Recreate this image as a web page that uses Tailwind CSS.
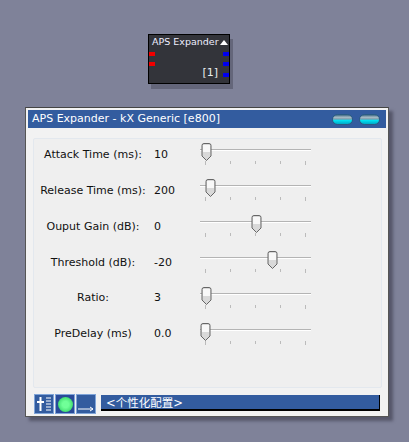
<!DOCTYPE html>
<html lang="en">
<head>
    <meta charset="UTF-8">
    <meta name="viewport" content="width=device-width, initial-scale=1.0">
    <title>APS Expander</title>
    <script src="https://cdn.jsdelivr.net/npm/@tailwindcss/browser@4"></script>
</head>
<body class="w-[409px] h-[442px] overflow-hidden bg-[#7f8299] font-['DejaVu_Sans','Noto_Sans_CJK_SC',sans-serif] text-[11px] text-[#111]">
    <!-- plugin box -->
    <div class="relative mt-[34px] ml-[148px] w-[82px] h-[50px] bg-[#33343a] border border-black shadow-[3px_5px_0_#64667a] text-white">
        <div class="flex items-center justify-between pl-[3px] pr-[1px] h-[15px] text-[9.5px] text-[#eef] whitespace-nowrap">
            <span>APS Expander</span>
            <svg width="8" height="5" viewBox="0 0 8 5"><path d="M4 0 8 5H0Z" fill="#fff"/></svg>
        </div>
        <div class="absolute left-0 top-[17px] w-[6px] h-[4px] bg-[#f00000]"></div>
        <div class="absolute left-0 top-[27px] w-[6px] h-[4px] bg-[#f00000]"></div>
        <div class="absolute right-0 top-[17px] w-[6px] h-[4px] bg-[#0000f0]"></div>
        <div class="absolute right-0 top-[27px] w-[6px] h-[4px] bg-[#0000f0]"></div>
        <div class="absolute right-0 top-[38px] w-[6px] h-[4px] bg-[#0000f0]"></div>
        <span class="absolute right-[11px] bottom-[2px] text-[#e8eef0]">[1]</span>
    </div>

    <!-- kX window -->
    <div class="mt-[23px] ml-[25px] w-[364px] h-[310px] bg-[#f2f2f2] border border-[#555] border-t-[#444] shadow-[4px_4px_3px_#55576a] pt-[2px] px-[1px]">
        <div class="flex items-center justify-between mx-[1px] h-[18px] bg-[#335c9f] pl-[4px] pr-[6px] text-white text-[11px] whitespace-nowrap">
            <span>APS Expander - kX Generic [e800]</span>
            <div class="flex gap-[6px]">
                <div class="w-[21px] h-[11px] rounded-full border border-[#2a5c84] bg-[linear-gradient(#3f6a85_0%,#a9bcc6_25%,#7f9cac_45%,#00e2f2_60%,#00a8c8_100%)]"></div>
                <div class="w-[21px] h-[11px] rounded-full border border-[#2a5c84] bg-[linear-gradient(#3f6a85_0%,#a9bcc6_25%,#7f9cac_45%,#00e2f2_60%,#00a8c8_100%)]"></div>
            </div>
        </div>

        <!-- parameters panel -->
        <div class="mt-[10px] ml-[6px] w-[349px] h-[250px] bg-[#efefef] border border-[#e3e8ee] rounded-[2px] pt-[5px]">
            <div class="flex items-start h-[36px]">
                <div class="w-[118px] text-center mt-[3px]">Attack Time (ms):</div>
                <div class="w-[46px] ml-[2px] mt-[3px]">10</div>
                <div class="relative w-[111px] h-[32px]">
                    <div class="absolute top-[5px] w-full h-[2px] bg-[#b4b4b4] border-b border-white"></div>
                    <div class="absolute left-[1px] -top-[1px] w-[11px] h-[19px]"><svg width="11" height="19" viewBox="0 0 11 19"><path d="M3 .5h5a2 2 0 0 1 2 2v10.5l-4.5 4.5-4.5-4.5V2.5a2 2 0 0 1 2-2z" fill="#d9d9d9" stroke="#666"/><path d="M2 2h7v7H2z" fill="#f8f8f8"/></svg></div>
                    <div class="absolute top-[17px] left-[5px] right-[5px] flex justify-between"><i class="w-px h-[4px] bg-[#bbb]"></i><i class="w-px h-[3px] bg-[#bbb]"></i><i class="w-px h-[3px] bg-[#bbb]"></i><i class="w-px h-[3px] bg-[#bbb]"></i><i class="w-px h-[4px] bg-[#bbb]"></i></div>
                </div>
            </div>
            <div class="flex items-start h-[36px]">
                <div class="w-[118px] text-center mt-[3px]">Release Time (ms):</div>
                <div class="w-[46px] ml-[2px] mt-[3px]">200</div>
                <div class="relative w-[111px] h-[32px]">
                    <div class="absolute top-[5px] w-full h-[2px] bg-[#b4b4b4] border-b border-white"></div>
                    <div class="absolute left-[5px] -top-[1px] w-[11px] h-[19px]"><svg width="11" height="19" viewBox="0 0 11 19"><path d="M3 .5h5a2 2 0 0 1 2 2v10.5l-4.5 4.5-4.5-4.5V2.5a2 2 0 0 1 2-2z" fill="#d9d9d9" stroke="#666"/><path d="M2 2h7v7H2z" fill="#f8f8f8"/></svg></div>
                    <div class="absolute top-[17px] left-[5px] right-[5px] flex justify-between"><i class="w-px h-[4px] bg-[#bbb]"></i><i class="w-px h-[3px] bg-[#bbb]"></i><i class="w-px h-[3px] bg-[#bbb]"></i><i class="w-px h-[3px] bg-[#bbb]"></i><i class="w-px h-[4px] bg-[#bbb]"></i></div>
                </div>
            </div>
            <div class="flex items-start h-[36px]">
                <div class="w-[118px] text-center mt-[3px]">Ouput Gain (dB):</div>
                <div class="w-[46px] ml-[2px] mt-[3px]">0</div>
                <div class="relative w-[111px] h-[32px]">
                    <div class="absolute top-[5px] w-full h-[2px] bg-[#b4b4b4] border-b border-white"></div>
                    <div class="absolute left-[51px] -top-[1px] w-[11px] h-[19px]"><svg width="11" height="19" viewBox="0 0 11 19"><path d="M3 .5h5a2 2 0 0 1 2 2v10.5l-4.5 4.5-4.5-4.5V2.5a2 2 0 0 1 2-2z" fill="#d9d9d9" stroke="#666"/><path d="M2 2h7v7H2z" fill="#f8f8f8"/></svg></div>
                    <div class="absolute top-[17px] left-[5px] right-[5px] flex justify-between"><i class="w-px h-[4px] bg-[#bbb]"></i><i class="w-px h-[3px] bg-[#bbb]"></i><i class="w-px h-[3px] bg-[#bbb]"></i><i class="w-px h-[3px] bg-[#bbb]"></i><i class="w-px h-[4px] bg-[#bbb]"></i></div>
                </div>
            </div>
            <div class="flex items-start h-[36px]">
                <div class="w-[118px] text-center mt-[3px]">Threshold (dB):</div>
                <div class="w-[46px] ml-[2px] mt-[3px]">-20</div>
                <div class="relative w-[111px] h-[32px]">
                    <div class="absolute top-[5px] w-full h-[2px] bg-[#b4b4b4] border-b border-white"></div>
                    <div class="absolute left-[67px] -top-[1px] w-[11px] h-[19px]"><svg width="11" height="19" viewBox="0 0 11 19"><path d="M3 .5h5a2 2 0 0 1 2 2v10.5l-4.5 4.5-4.5-4.5V2.5a2 2 0 0 1 2-2z" fill="#d9d9d9" stroke="#666"/><path d="M2 2h7v7H2z" fill="#f8f8f8"/></svg></div>
                    <div class="absolute top-[17px] left-[5px] right-[5px] flex justify-between"><i class="w-px h-[4px] bg-[#bbb]"></i><i class="w-px h-[3px] bg-[#bbb]"></i><i class="w-px h-[3px] bg-[#bbb]"></i><i class="w-px h-[3px] bg-[#bbb]"></i><i class="w-px h-[4px] bg-[#bbb]"></i></div>
                </div>
            </div>
            <div class="flex items-start h-[36px]">
                <div class="w-[118px] text-center mt-[2px]">Ratio:</div>
                <div class="w-[46px] ml-[2px] mt-[2px]">3</div>
                <div class="relative w-[111px] h-[32px]">
                    <div class="absolute top-[5px] w-full h-[2px] bg-[#b4b4b4] border-b border-white"></div>
                    <div class="absolute left-[1px] -top-[1px] w-[11px] h-[19px]"><svg width="11" height="19" viewBox="0 0 11 19"><path d="M3 .5h5a2 2 0 0 1 2 2v10.5l-4.5 4.5-4.5-4.5V2.5a2 2 0 0 1 2-2z" fill="#d9d9d9" stroke="#666"/><path d="M2 2h7v7H2z" fill="#f8f8f8"/></svg></div>
                    <div class="absolute top-[17px] left-[5px] right-[5px] flex justify-between"><i class="w-px h-[4px] bg-[#bbb]"></i><i class="w-px h-[3px] bg-[#bbb]"></i><i class="w-px h-[3px] bg-[#bbb]"></i><i class="w-px h-[3px] bg-[#bbb]"></i><i class="w-px h-[4px] bg-[#bbb]"></i></div>
                </div>
            </div>
            <div class="flex items-start h-[36px]">
                <div class="w-[118px] text-center mt-[2px]">PreDelay (ms)</div>
                <div class="w-[46px] ml-[2px] mt-[2px]">0.0</div>
                <div class="relative w-[111px] h-[32px]">
                    <div class="absolute top-[5px] w-full h-[2px] bg-[#b4b4b4] border-b border-white"></div>
                    <div class="absolute left-0 -top-[1px] w-[11px] h-[19px]"><svg width="11" height="19" viewBox="0 0 11 19"><path d="M3 .5h5a2 2 0 0 1 2 2v10.5l-4.5 4.5-4.5-4.5V2.5a2 2 0 0 1 2-2z" fill="#d9d9d9" stroke="#666"/><path d="M2 2h7v7H2z" fill="#f8f8f8"/></svg></div>
                    <div class="absolute top-[17px] left-[5px] right-[5px] flex justify-between"><i class="w-px h-[4px] bg-[#bbb]"></i><i class="w-px h-[3px] bg-[#bbb]"></i><i class="w-px h-[3px] bg-[#bbb]"></i><i class="w-px h-[3px] bg-[#bbb]"></i><i class="w-px h-[4px] bg-[#bbb]"></i></div>
                </div>
            </div>
        </div>

        <!-- bottom toolbar -->
        <div class="flex items-start mt-[6px] ml-[7px] gap-[1px]">
            <div class="w-[20px] h-[20px] bg-[#335c9f] border border-[#7fa4d8]">
                <svg width="18" height="18" viewBox="0 0 18 18"><path d="M5.5 2v14M2 7h7" stroke="#fff" stroke-width="2" fill="none"/><path d="M11 3h5M11 6h5M11 9h5M11 12h5M11 15h5" stroke="#fff" stroke-width="1" fill="none"/></svg>
            </div>
            <div class="w-[20px] h-[20px] bg-[#2a4a98] border border-[#7fa4d8] flex items-center justify-center">
                <div class="w-[15px] h-[15px] rounded-full bg-radial from-[#70ff98] from-30% to-[#00c858]"></div>
            </div>
            <div class="w-[20px] h-[20px] bg-[#335c9f] border border-[#7fa4d8]">
                <svg width="18" height="18" viewBox="0 0 18 18"><path d="M1 14h15M13 12l3 2-3 2" stroke="#fff" stroke-width="1" fill="none"/></svg>
            </div>
            <div class="ml-[4px] mt-[1px] w-[279px] h-[16px] bg-[#335c9f] border-b-2 border-r border-black flex items-center pt-[3px] pl-[5px] text-white text-[11.5px] leading-none">&lt;个性化配置&gt;</div>
        </div>
    </div>
</body>
</html>
